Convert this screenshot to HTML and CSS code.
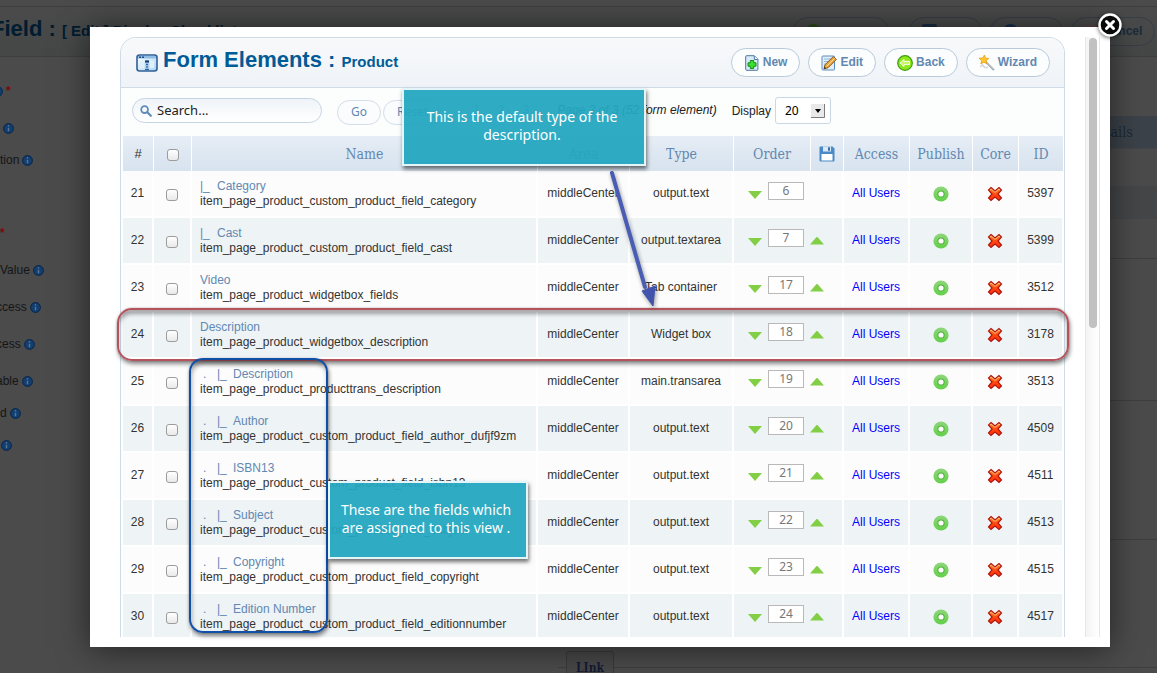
FILE: index.html
```html
<!DOCTYPE html>
<html lang="en">
<head>
<meta charset="utf-8">
<title>Form Elements : Product</title>
<link rel="stylesheet" href="styles.css">
</head>
<body>
<svg class="defs" aria-hidden="true">
  <defs>
    <linearGradient id="g-ring" x1="0" y1="0" x2="0" y2="1"><stop offset="0" stop-color="#8fd67c"/><stop offset="1" stop-color="#62d048"/></linearGradient>
    <linearGradient id="g-cross" x1="0" y1="0" x2="0" y2="1"><stop offset="0" stop-color="#ff9a2a"/><stop offset=".5" stop-color="#ff4a10"/><stop offset="1" stop-color="#ff2a08"/></linearGradient>
    <linearGradient id="g-win" x1="0" y1="0" x2="1" y2="1"><stop offset="0" stop-color="#ffffff"/><stop offset="1" stop-color="#a9d3f3"/></linearGradient>
    <symbol id="ring" viewBox="0 0 16 16"><circle cx="8" cy="8" r="7.6" fill="url(#g-ring)"/><circle cx="8" cy="8" r="3.6" fill="#4fae3a"/><circle cx="8" cy="8" r="2.6" fill="#fff"/></symbol>
    <symbol id="cross" viewBox="0 0 16 16"><path d="M4 1.500 L8 5 L12 1.500 L14.500 4 L11 8 L14.500 12 L12 14.500 L8 11 L4 14.500 L1.500 12 L5 8 L1.500 4 Z" fill="url(#g-cross)" stroke="#b01810" stroke-width="1.2"/><path d="M3 4 L4 3 L8 6.400 L12 3 L13 4" fill="none" stroke="#ffc890" stroke-width=".8"/></symbol>
    <symbol id="info" viewBox="0 0 12 12"><circle cx="6" cy="6" r="5.400" fill="#123e70" stroke="#082448" stroke-width="1"/><path d="M6 5.200V9" stroke="#5a7590" stroke-width="1.600"/><circle cx="6" cy="3.200" r=".9" fill="#5a7590"/></symbol>
  </defs>
</svg>

<div class="backdrop" aria-hidden="true">
  <div class="bg-head">
    <p class="bg-title">Field : <small>[ Edit ] Display Checklist</small></p>
    <div class="bg-actions">
      <span class="bg-pill bg-w1"><i class="dot dot-green"></i></span>
      <span class="bg-pill bg-w2"><i class="dot dot-disk"></i></span>
      <span class="bg-pill bg-w2"><i class="dot dot-blue"></i></span>
      <span class="bg-pill bg-w3"><svg class="dim-cross"><use href="#cross"/></svg>Cancel</span>
    </div>
  </div>
  <div class="bg-body">
    <ul class="bg-list">
      <li class="cut"><svg class="info"><use href="#info"/></svg><b>*</b></li>
      <li class="gap-m in-4"><svg class="info"><use href="#info"/></svg></li>
      <li>tion <svg class="info"><use href="#info"/></svg></li>
      <li class="gap-l"><b>*</b></li>
      <li class="gap-m">Value <svg class="info"><use href="#info"/></svg></li>
      <li class="gap-m back">ccess <svg class="info"><use href="#info"/></svg></li>
      <li class="gap-m back">cess <svg class="info"><use href="#info"/></svg></li>
      <li class="gap-m back">able <svg class="info"><use href="#info"/></svg></li>
      <li>d <svg class="info"><use href="#info"/></svg></li>
      <li class="in-1"><svg class="info"><use href="#info"/></svg></li>
    </ul>
    <div class="bg-side">
      <div class="bg-tab">Details</div>
      <div class="bg-strip"></div>
      <div class="bg-strip bg-dark"></div>
      <div class="bg-box bg-first"></div>
      <div class="bg-box"></div>
      <div class="bg-box"></div>
    </div>
  </div>
  <div class="bg-foot"><span class="bg-legend">LInk</span></div>
</div>

<main class="modal" role="dialog" aria-label="Form Elements">
  <div class="viewport">
    <section class="panel">
      <header class="panel-head">
        <svg class="app-icon" viewBox="0 0 22 18" aria-hidden="true"><rect x="1" y="1" width="20" height="16" rx="2.5" fill="url(#g-win)" stroke="#2d6096" stroke-width="1.6"/><path d="M2 2h18v2.500H2z" fill="#8dbde6"/><path d="M3 3.200h2M6 3.200h2" stroke="#1d4f86" stroke-width="1.400"/><path d="M4 7h4v7H4zM14 7h4v7h-4z" fill="#dff0fc"/><path d="M11 6v10" stroke="#8fbbe2" stroke-width="3"/><path d="M9 6.500h4v2H9z" fill="#123f70"/><path d="M10 10.500h2M10 13h2M9 15.500h4" stroke="#2f659b" stroke-width="1.200"/></svg>
        <h1>Form Elements : <small>Product</small></h1>
        <div class="actions">
          <button type="button"><svg viewBox="0 0 16 16" aria-hidden="true"><path d="M1.700 1.700q0-1 1-1h7.600l3.600 3.600v10q0 1-1 1H2.700q-1 0-1-1z" fill="#d9ebfa" stroke="#4c759f"/><path d="M10.300 1v3.500h3.400" fill="#fff" stroke="#4c759f"/><path d="M6.300 5.500h3.400v2.300H12v3.400H9.700v2.300H6.300v-2.300H4V7.800h2.300z" fill="#3fe02c" stroke="#0f8f18"/></svg>New</button>
          <button type="button"><svg viewBox="0 0 16 16" aria-hidden="true"><rect x="1" y="1" width="12.500" height="14" rx="1" fill="#e2effb" stroke="#5b8cc0"/><path d="M3 4h7M3 6.500h5M3 9h3" stroke="#8fb7df"/><path d="M3 13.800l1-4 8.300-8.300 3 3L7 12.800z" fill="#e8a63c" stroke="#8a5714"/><path d="M5.500 11.500l8-8" stroke="#ffe0a0"/><path d="M3 13.800l.500-2 1.500 1.500z" fill="#222"/></svg>Edit</button>
          <button type="button"><svg viewBox="0 0 16 16" aria-hidden="true"><circle cx="8" cy="8" r="7.300" fill="#8fe81c" stroke="#3f9a12" stroke-width="1.200"/><path d="M3 8l4-3.600v2h5.500v3.200H7v2z" fill="#c8f76a" stroke="#fff" stroke-width=".9"/></svg>Back</button>
          <button type="button"><svg viewBox="0 0 16 16" aria-hidden="true"><path d="M1 11.500l3-1 2 2 3 0M3 9l3 4" stroke="#d3d7dd" stroke-width="1.400" fill="none"/><path d="M6.500 6.500l8.500 8.500" stroke="#9aa3ad" stroke-width="2"/><path d="M6.500 6l8.500 8.500" stroke="#e6e9ed" stroke-width=".8"/><path d="M5.500 0l1 3.200 3.300.3-2.600 2.100.6 3.200-2.900-1.600L1.800 9l.8-3.400L0 3.200l3.600-.2z" fill="#ffc52a" stroke="#e39a10" stroke-width=".7"/></svg>Wizard</button>
        </div>
      </header>

      <form class="toolbar">
        <div class="search">
          <svg viewBox="0 0 12 12" aria-hidden="true"><circle cx="4.600" cy="4.600" r="3.400" fill="none" stroke="#5f8cb9" stroke-width="1.800"/><path d="M7.300 7.300l3.500 3.500" stroke="#5f8cb9" stroke-width="2.200" stroke-linecap="round"/></svg>
          <input type="text" value="Search..." aria-label="Search">
        </div>
        <div class="buttons">
          <button type="button">Go</button>
          <button type="button">Reset</button>
        </div>
        <div class="paging">
          <a href="#">1</a><span>2</span><a class="last" href="#">3</a>
          <em>Page 2 of 3 (52 form element)</em>
          <label for="display">Display</label>
          <div class="pick">
            <select id="display"><option>20</option></select>
            <svg viewBox="0 0 14 14" aria-hidden="true"><path d="M0 0h14v14H0z" fill="#e9e9e9"/><path d="M13.500 0v13.500H0" fill="none" stroke="#7c7c7c"/><path d="M4 5h6L7 9z" fill="#000"/></svg>
          </div>
        </div>
      </form>

      <table>
        <colgroup><col class="c-num"><col class="c-check"><col><col class="c-area"><col class="c-type"><col class="c-order"><col class="c-save"><col class="c-access"><col class="c-publish"><col class="c-core"><col class="c-id"></colgroup>
        <thead>
          <tr>
            <th class="hash">#</th>
            <th><input type="checkbox" aria-label="Select all"></th>
            <th>Name</th><th>Area</th><th>Type</th><th>Order</th>
            <th><svg class="save" viewBox="0 0 16 16" role="img" aria-label="Save order"><path d="M.5 1.500q0-1 1-1h12l2 2v12q0 1-1 1h-13q-1 0-1-1z" fill="#4a8ac8"/><path d="M4 .5h8v5H4z" fill="#dbe9f6"/><path d="M9 1.300h2v3.400H9z" fill="#3672b0"/><path d="M2.500 8h11v6.500h-11z" fill="#fff"/></svg></th>
            <th>Access</th><th>Publish</th><th>Core</th><th>ID</th>
          </tr>
        </thead>
        <tbody id="rows"></tbody>
      </table>
    </section>
    <div class="track" aria-hidden="true"><div class="thumb"></div></div>
  </div>

  <div class="mark mark-row"></div>
  <div class="mark mark-fields"></div>
  <svg class="arrow" viewBox="0 0 60 146" aria-hidden="true"><path d="M12 8L45 122" stroke="#4a5db4" stroke-width="4" stroke-linecap="round"/><path d="M42 126L55 121L53 141Z" fill="#4153ac" stroke="#4153ac"/></svg>
  <p class="callout callout-type">This is the default type of the description.</p>
  <p class="callout callout-fields">These are the fields which are assigned to this view .</p>
  <button class="close" type="button" aria-label="Close"><svg viewBox="0 0 24 24" aria-hidden="true"><circle cx="12" cy="12" r="10.500" fill="#0a0a0a" stroke="#fff" stroke-width="2.400"/><path d="M8.500 8.500l7 7M15.500 8.500l-7 7" stroke="#fff" stroke-width="3" stroke-linecap="round"/></svg></button>
</main>
<script src="rows.js"></script>
</body>
</html>
```

FILE: rows.js
```js
const base = 'item_page_product_';
const items = [
  [21, 1, 'Category', 'custom_product_field_category', 'output.text', 6, 5397],
  [22, 1, 'Cast', 'custom_product_field_cast', 'output.textarea', 7, 5399],
  [23, 0, 'Video', 'widgetbox_fields', 'Tab container', 17, 3512],
  [24, 0, 'Description', 'widgetbox_description', 'Widget box', 18, 3178],
  [25, 2, 'Description', 'producttrans_description', 'main.transarea', 19, 3513],
  [26, 2, 'Author', 'custom_product_field_author_dufjf9zm', 'output.text', 20, 4509],
  [27, 2, 'ISBN13', 'custom_product_field_isbn13', 'output.text', 21, 4511],
  [28, 2, 'Subject', 'custom_product_field_subject', 'output.text', 22, 4513],
  [29, 2, 'Copyright', 'custom_product_field_copyright', 'output.text', 23, 4515],
  [30, 2, 'Edition Number', 'custom_product_field_editionnumber', 'output.text', 24, 4517]
];
const branch = [
  '',
  '<span class="limb">|_</span>',
  '<span class="stem">.</span><span class="limb">|_</span>'
];
const down = '<button type="button" class="down" aria-label="Move down"></button>';
const up = '<button type="button" class="up" aria-label="Move up"></button>';

document.getElementById('rows').innerHTML = items.map(([n, depth, title, key, type, order, id], i) => `
  <tr>
    <td>${n}</td>
    <td><input type="checkbox" aria-label="Select ${title}"></td>
    <td class="name"><a href="#">${branch[depth]}${title}</a><span class="key">${base}${key}</span></td>
    <td>middleCenter</td>
    <td>${type}</td>
    <td colspan="2"><div class="order">${down}<input type="text" value="${order}" aria-label="Order of ${title}">${i ? up : ''}</div></td>
    <td><a class="users" href="#">All Users</a></td>
    <td><svg class="state"><use href="#ring"/></svg></td>
    <td><svg class="state"><use href="#cross"/></svg></td>
    <td>${id}</td>
  </tr>`).join('');
```

FILE: styles.css
```css
* { box-sizing: border-box; }
body { margin: 0; height: 100vh; overflow: hidden; position: relative; background: #4b4b4b; color: #333; font: 12px/15px "Liberation Sans", Arial, sans-serif; }
button, input, select { font: inherit; margin: 0; padding: 0; }
a { text-decoration: none; }
.defs { position: absolute; width: 0; height: 0; }

/* dimmed page */
.backdrop { height: 100vh; display: flex; flex-direction: column; padding-top: 6px; color: #151515; overflow: hidden; }
.bg-head { height: 51px; flex: none; display: flex; justify-content: space-between; border: solid #3c3f42; border-width: 1px 0; background: linear-gradient(#4a4a4a, #454747); overflow: hidden; }
.bg-title { margin: 9px 0 0 -9px; font-weight: bold; font-size: 22px; line-height: 26px; color: #001c30; white-space: nowrap; }
.bg-title small { font-size: 15px; }
.bg-actions { display: flex; gap: 8px; padding: 10px 2px 0 0; }
.bg-pill { height: 29px; border: 1px solid #363e46; border-radius: 15px; display: flex; align-items: center; padding-left: 12px; gap: 4px; color: #1b2b3a; font-weight: bold; }
.bg-w1 { width: 96px; margin-right: 12px; }
.bg-w2 { width: 73px; }
.bg-w3 { width: 84px; }
.dot { width: 15px; height: 15px; border-radius: 8px; }
.dot-green { background: #2b4a18; }
.dot-disk { background: #1c2c40; border-radius: 2px; }
.dot-blue { background: #132f4c; }
.dim-cross { width: 15px; height: 15px; opacity: .3; }
.bg-body { flex: 1; min-height: 0; overflow: hidden; display: flex; justify-content: space-between; }
.bg-list { list-style: none; margin: 0; padding: 26px 0 0; line-height: 16px; }
.bg-list li { display: flex; align-items: center; gap: 3px; height: 16px; margin-top: 16px; }
.bg-list li.cut { margin: 0 0 0 -8px; }
.bg-list li.gap-m { margin-top: 21px; }
.bg-list li.gap-l { margin-top: 57px; }
.bg-list li.in-4 { padding-left: 3px; }
.bg-list li.in-1 { padding-left: 1px; }
.bg-list li.back { margin-left: -4px; }
.bg-list b { color: #7c0a0a; }
.info { width: 11px; height: 11px; }
.bg-side { width: 54px; padding-top: 59px; }
.bg-tab { height: 33px; line-height: 33px; background: #3c4249; color: #192a3b; text-indent: -15px; font-family: "DejaVu Serif Condensed", "DejaVu Serif", serif; font-size: 14px; border-bottom: 1px solid #42474b; }
.bg-strip { height: 37px; }
.bg-dark { height: 33px; background: #444648; }
.bg-box { height: 139px; border-top: 1px solid #3c3f42; }
.bg-first { margin-top: 39px; height: 142px; }
.bg-foot { height: 22px; flex: none; margin-left: 558px; display: flex; background: linear-gradient(#3c3f42, #3c3f42) 0 16px / 100% 1px no-repeat; }
.bg-legend { margin-left: 8px; width: 48px; height: 40px; padding-top: 7px; text-align: center; border: 1px solid #3a3a3c; border-radius: 3px; background: #484848; color: #141b33; font: bold 12px/18px "DejaVu Serif Condensed", "DejaVu Serif", serif; }

/* lightbox */
.modal { position: absolute; inset: 27px 47px 26px 90px; background: #fff; box-shadow: 0 2px 30px rgba(0, 0, 0, .55); padding: 10px; }
.viewport { height: 100%; overflow: hidden; display: flex; gap: 20px; padding-left: 20px; }
.panel { flex: 1; min-width: 0; height: 100%; overflow: hidden; border: solid #cfdce8; border-width: 1px 1px 0; border-radius: 16px 16px 0 0; background: #fcfdfd; }
.panel-head { height: 50px; display: flex; align-items: center; border-bottom: 1px solid #cfdce8; background: linear-gradient(#f8f9fb, #eff3f7); padding: 0 14px 0 15px; }
.app-icon { width: 22px; height: 18px; margin-right: 5px; }
h1 { margin: 0 0 4px; font-size: 22px; line-height: 26px; color: #005b96; white-space: nowrap; }
h1 small { font-size: 15px; }
.actions { margin-left: auto; display: flex; gap: 8px; }
.actions button { height: 29px; border: 1px solid #b9cadb; border-radius: 15px; background: linear-gradient(#fafcfd, #fdffff); color: #6288b1; font-weight: bold; display: flex; align-items: center; gap: 3px; padding: 0 12px; }
.actions svg { width: 16px; height: 16px; }
.toolbar { height: 48px; margin: 0; display: flex; align-items: center; padding: 0 233px 3px 11px; color: #222; }
.search { width: 190px; height: 25px; flex: none; border: 1px solid #c6d5e3; border-radius: 13px; display: flex; align-items: center; gap: 5px; padding: 0 7px; background: linear-gradient(#eff4f8, #fff); }
.search svg { width: 12px; height: 12px; flex: none; }
.search input { min-width: 0; flex: 1; border: 0; background: none; outline: 0; color: #222; font: 13px/17px "Noto Sans", sans-serif; }
.buttons { display: flex; gap: 2px; margin-left: 15px; padding-top: 3px; }
.buttons button { height: 25px; padding: 0 13px; border: 1px solid #d2dee9; border-radius: 13px; background: #fafcfe; color: #6288b1; font: 12px/16px "Noto Sans", sans-serif; }
.paging { margin-left: auto; display: flex; align-items: center; white-space: nowrap; }
.paging a, .paging span { margin-right: 18px; color: #6288b1; }
.paging a.last { margin-right: 28px; }
.paging em { margin-right: 15px; }
.paging label { margin-right: 4px; padding-top: 2px; }
.pick { position: relative; width: 56px; height: 27px; }
.pick select { width: 100%; height: 100%; appearance: none; border: 1px solid #cad8e5; border-radius: 3px; background: #fff; padding-left: 9px; color: #000; font: 12px/16px "Noto Sans", sans-serif; }
.pick svg { position: absolute; right: 6px; top: 7px; width: 14px; height: 14px; pointer-events: none; }

table { width: calc(100% - 2px); margin-left: 2px; table-layout: fixed; border-collapse: separate; border-spacing: 0; }
.c-num { width: 31px; } .c-check { width: 38px; } .c-area { width: 92px; } .c-type { width: 104px; } .c-order { width: 77px; } .c-save { width: 33px; } .c-access { width: 66px; } .c-publish { width: 63px; } .c-core { width: 46px; } .c-id { width: 45px; }
th, td { padding: 0; text-align: center; white-space: nowrap; }
th { height: 35px; background: linear-gradient(#e6edf5, #d7e3ef); border-right: 1px solid #fff; color: #6288b1; font: 14px/18px "DejaVu Serif Condensed", "DejaVu Serif", serif; }
th.hash { color: #333; font: 13px/15px "Liberation Sans", sans-serif; }
td { height: 47px; border: solid #fff; border-width: 0 2px 2px 0; background: #fcfcfc; }
tr:nth-child(even) td { background: #eef3f6; }
.name { text-align: left; padding-left: 8px; }
.name a { display: flex; color: #6288b1; }
.key { display: block; }
.limb { width: 17px; }
.stem { width: 14px; padding-left: 3px; }
.name .stem + .limb { width: 16px; margin-left: 3px; }
.users { color: #00f; }
.state, .save { display: block; width: 16px; height: 16px; margin: 0 auto; }
input[type="checkbox"] { appearance: none; display: block; width: 12px; height: 12px; margin: 2px auto 0; border: 1px solid #9c9c9c; border-radius: 3px; background: linear-gradient(#fff, #e9e9e9); }
.order { display: flex; align-items: center; gap: 6px; padding-left: 14px; }
.order input { width: 36px; height: 18px; margin-bottom: 6px; border: 1px solid #b9b9b9; background: #fff; color: #777; text-align: center; font: 12px/14px "Noto Sans", sans-serif; }
.up, .down { width: 14px; height: 8px; border: 0; background: #82cf45; }
.up { clip-path: polygon(50% 0, 100% 100%, 0 100%); }
.down { clip-path: polygon(0 0, 100% 0, 50% 100%); margin-top: 3px; }
.track { width: 15px; flex: none; border: solid #e6e6e6; border-width: 0 1px; background: linear-gradient(90deg, #f4f4f4, #fff); padding: 1px 3px 0; }
.thumb { width: 8px; height: 290px; border-radius: 4px; background: #c1c1c1; }

/* annotations */
.mark { position: absolute; pointer-events: none; }
.mark-row { left: 27px; right: 41px; top: 281px; height: 53px; border: 2px solid #b5525c; border-radius: 15px; box-shadow: 1px 3px 4px rgba(0, 0, 0, .45), inset 0 4px 4px rgba(0, 0, 0, .35), 0 0 2px rgba(0, 0, 0, .3); }
.mark-fields { left: 99px; top: 331px; width: 139px; height: 275px; border: 2px solid #0f4fa8; border-radius: 14px; box-shadow: 1px 3px 4px rgba(0, 0, 0, .45), inset 1px 4px 4px rgba(0, 0, 0, .3), 0 0 2px rgba(0, 0, 0, .3); }
.arrow { position: absolute; left: 510px; top: 138px; width: 60px; height: 146px; filter: drop-shadow(1px 2px 2px rgba(0, 0, 0, .4)); }
.callout { position: absolute; margin: 0; display: flex; align-items: center; text-align: center; border: 2px solid #e4f5f9; background: rgba(36, 166, 192, .95); color: #fff; font: 14px/18px "Noto Sans", sans-serif; box-shadow: 1px 3px 4px rgba(0, 0, 0, .55); }
.callout-type { left: 312px; top: 61px; width: 244px; height: 78px; padding: 0 12px 2px 8px; }
.callout-fields { left: 238px; top: 454px; width: 200px; height: 78px; padding: 0 6px 2px 2px; }
.close { position: absolute; right: -12px; top: -14px; width: 24px; height: 24px; border: 0; background: none; filter: drop-shadow(0 1px 2px rgba(0, 0, 0, .6)); }
.close svg { display: block; width: 24px; height: 24px; }
```
